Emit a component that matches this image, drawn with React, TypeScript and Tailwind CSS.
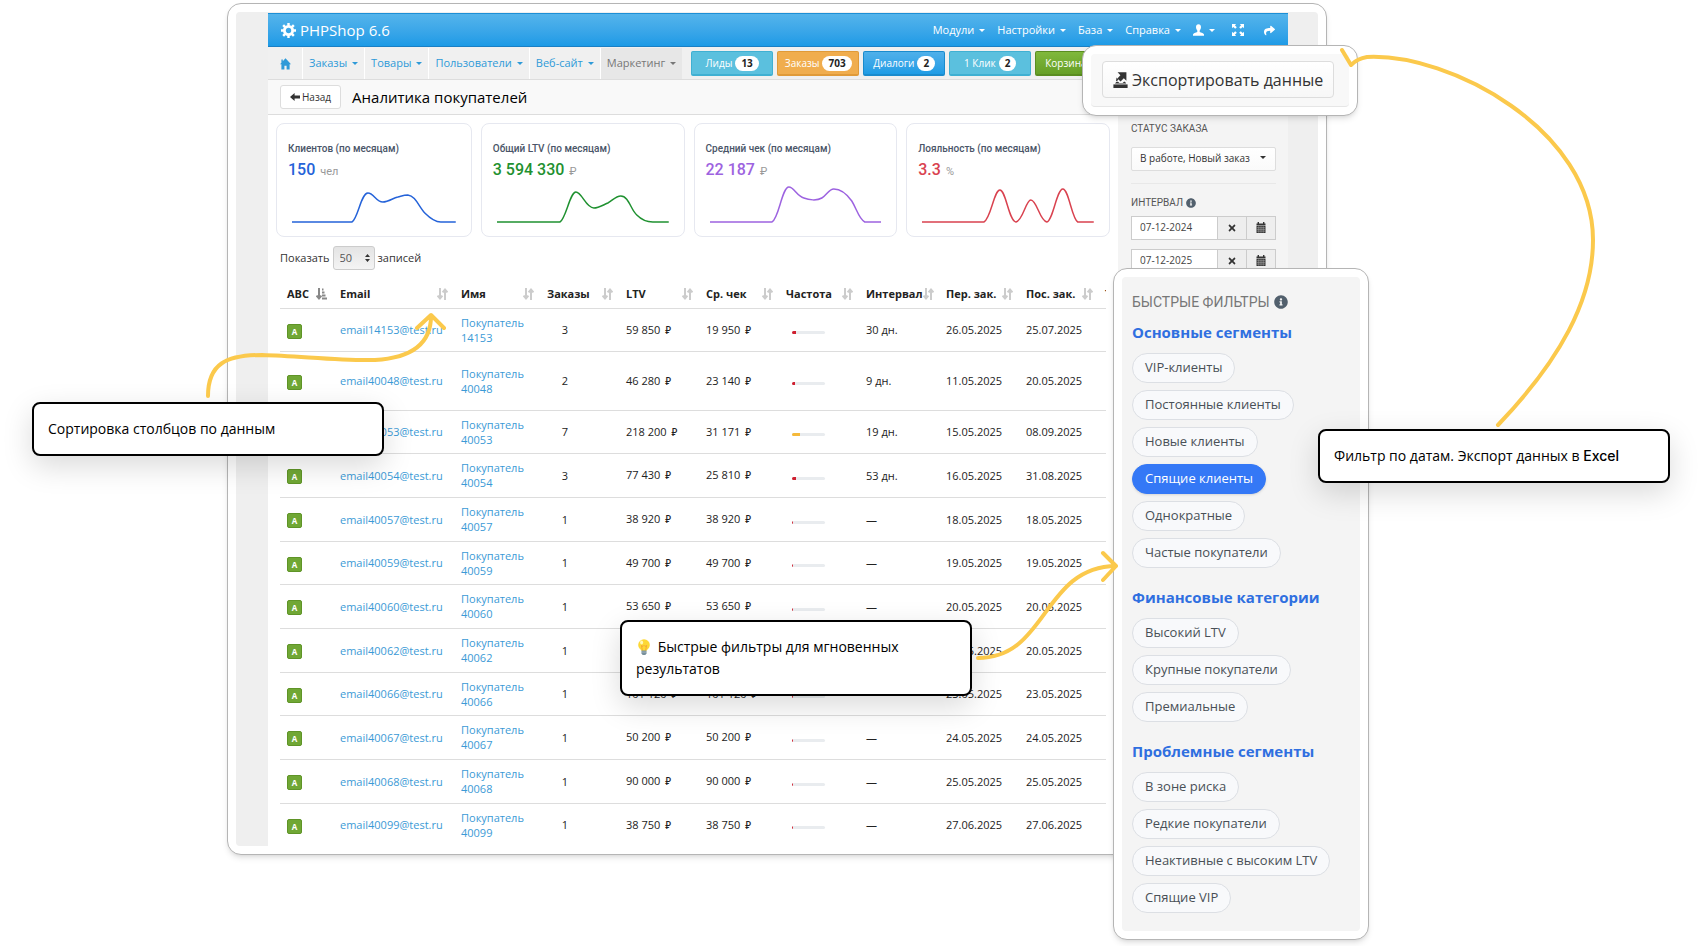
import React, { useState } from 'react';
import { FaInfoCircle, FaShare, FaTimes } from 'react-icons/fa';

interface Customer {
  id: string;
  orders: number;
  ltv: string;
  avg: string;
  freq: number;
  interval: string;
  first: string;
  last: string;
}

interface Stat {
  title: string;
  value: string;
  unit: string;
  color: string;
  width: number;
  path: string;
}

const STATS: Stat[] = [
  {
    title: 'Клиентов (по месяцам)',
    value: '150',
    unit: 'чел',
    color: 'text-[#2563d9]',
    width: 164,
    path: 'M0 38H60C66 35 69 9 76 9C82 9 84 18 91 18C97 18 101 14 106 13C110 12 112 11 116 11C124 12 127 23 133 29C138 34 143 38 149 38H164',
  },
  {
    title: 'Общий LTV (по месяцам)',
    value: '3 594 330',
    unit: '₽',
    color: 'text-[#1f9130]',
    width: 172,
    path: 'M0 38H63C69 35 73 8 79 8C85 8 89 24 97 24C102 24 106 21 111 19C115 17 119 12 124 12C132 12 134 26 140 31C145 36 151 38 156 38H172',
  },
  {
    title: 'Средний чек (по месяцам)',
    value: '22 187',
    unit: '₽',
    color: 'text-[#9d63e0]',
    width: 172,
    path: 'M0 38H62C69 35 72 3 79 3C84 3 87 12 94 14C99 16 107 17 112 14C117 11 119 5 124 5C131 5 137 10 142 17C147 25 149 35 155 38H172',
  },
  {
    title: 'Лояльность (по месяцам)',
    value: '3.3',
    unit: '%',
    color: 'text-[#d9424f]',
    width: 172,
    path: 'M0 38H62C69 35 72 6 78 6C84 6 87 37 94 38C101 37 104 16 109 16C115 16 118 37 125 38C131 37 135 5 141 5C147 5 150 35 156 38H172',
  },
];

const CUSTOMERS: Customer[] = [
  { id: '14153', orders: 3, ltv: '59 850', avg: '19 950', freq: 12, interval: '30 дн.', first: '26.05.2025', last: '25.07.2025' },
  { id: '40048', orders: 2, ltv: '46 280', avg: '23 140', freq: 8, interval: '9 дн.', first: '11.05.2025', last: '20.05.2025' },
  { id: '40053', orders: 7, ltv: '218 200', avg: '31 171', freq: 25, interval: '19 дн.', first: '15.05.2025', last: '08.09.2025' },
  { id: '40054', orders: 3, ltv: '77 430', avg: '25 810', freq: 12, interval: '53 дн.', first: '16.05.2025', last: '31.08.2025' },
  { id: '40057', orders: 1, ltv: '38 920', avg: '38 920', freq: 4, interval: '—', first: '18.05.2025', last: '18.05.2025' },
  { id: '40059', orders: 1, ltv: '49 700', avg: '49 700', freq: 4, interval: '—', first: '19.05.2025', last: '19.05.2025' },
  { id: '40060', orders: 1, ltv: '53 650', avg: '53 650', freq: 4, interval: '—', first: '20.05.2025', last: '20.05.2025' },
  { id: '40062', orders: 1, ltv: '63 400', avg: '63 400', freq: 4, interval: '—', first: '20.05.2025', last: '20.05.2025' },
  { id: '40066', orders: 1, ltv: '101 120', avg: '101 120', freq: 4, interval: '—', first: '23.05.2025', last: '23.05.2025' },
  { id: '40067', orders: 1, ltv: '50 200', avg: '50 200', freq: 4, interval: '—', first: '24.05.2025', last: '24.05.2025' },
  { id: '40068', orders: 1, ltv: '90 000', avg: '90 000', freq: 4, interval: '—', first: '25.05.2025', last: '25.05.2025' },
  { id: '40099', orders: 1, ltv: '38 750', avg: '38 750', freq: 4, interval: '—', first: '27.06.2025', last: '27.06.2025' },
];

const COLUMNS = [
  { label: 'ABC', width: 'w-[53px]' },
  { label: 'Email', width: 'w-[121px]' },
  { label: 'Имя', width: 'w-[86px]' },
  { label: 'Заказы', width: 'w-[79px]' },
  { label: 'LTV', width: 'w-[80px]' },
  { label: 'Ср. чек', width: 'w-[80px]' },
  { label: 'Частота', width: 'w-[80px]' },
  { label: 'Интервал', width: 'w-[80px]' },
  { label: 'Пер. зак.', width: 'w-[80px]' },
  { label: 'Пос. зак.', width: 'w-[80px]' },
];

const SEGMENTS = [
  {
    title: 'Основные сегменты',
    items: ['VIP-клиенты', 'Постоянные клиенты', 'Новые клиенты', 'Спящие клиенты', 'Однократные', 'Частые покупатели'],
  },
  { title: 'Финансовые категории', items: ['Высокий LTV', 'Крупные покупатели', 'Премиальные'] },
  { title: 'Проблемные сегменты', items: ['В зоне риска', 'Редкие покупатели', 'Неактивные с высоким LTV', 'Спящие VIP'] },
];

const COUNTERS = [
  { label: 'Лиды', count: 13, style: 'bg-[#5bc0de] border-[#3fb0d2]' },
  { label: 'Заказы', count: 703, style: 'bg-[#f0ad4e] border-[#e09a38]' },
  { label: 'Диалоги', count: 2, style: 'bg-linear-to-b from-[#4fb0ea] to-[#1d9ce5] border-[#1a8bcd]' },
  { label: '1 Клик', count: 2, style: 'bg-[#5bc0de] border-[#3fb0d2]' },
  { label: 'Корзина', count: 5, style: 'bg-linear-to-b from-[#80b83c] to-[#669f26] border-[#5a8d20]' },
];

const Caret = () => (
  <span className="inline-block border-x-[3px] border-t-[3px] border-x-transparent border-t-current" />
);

const GearIcon = () => (
  <svg width="15" height="15" viewBox="0 0 16 16" fill="none" stroke="currentColor">
    <circle cx="8" cy="8" r="4.4" strokeWidth="3" />
    <path strokeWidth="2.6" d="M8 0V3M8 13V16M0 8H3M13 8H16M2.3 2.3L4.4 4.4M11.6 11.6L13.7 13.7M2.3 13.7L4.4 11.6M11.6 4.4L13.7 2.3" />
  </svg>
);

const HomeIcon = () => (
  <svg width="11" height="12" viewBox="0 0 11 12" fill="currentColor">
    <path d="M5.5 0.3L11 6.2H9.6V11.6H6.6V7.8H4.4V11.6H1.4V6.2H0L1.4 4.7V1.6H2.8V3.2Z" />
  </svg>
);

const UserIcon = () => (
  <svg width="11" height="12" viewBox="0 0 11 12" fill="currentColor">
    <path d="M5.5 0.3C7.2 0.3 8 1.4 8 3.1C8 4.6 7.4 5.8 6.7 6.6V7.9C8.2 8.6 11 9.2 11 10.6V11.7H0V10.6C0 9.2 2.8 8.6 4.3 7.9V6.6C3.6 5.8 3 4.6 3 3.1C3 1.4 3.8 0.3 5.5 0.3Z" />
  </svg>
);

const BackIcon = () => (
  <svg width="10" height="8" viewBox="0 0 10 8" fill="currentColor">
    <path d="M0 4L4.6 0V2.6H10V5.4H4.6V8Z" />
  </svg>
);

const SortIcon = ({ active = false }: { active?: boolean }) => (
  <svg width="11" height="12" viewBox="0 0 11 12" fill="none" strokeWidth="2" className={`shrink-0 ${active ? 'stroke-[#888]' : 'stroke-[#ccc]'}`}>
    <path d="M3 0V10M0.6 7.6L3 10.4L5.4 7.6" />
    {active ? <path d="M6 1.5H7.5M6 4.5H8.5M6 7.5H9.5M6 10.5H11" /> : <path d="M8 12V2M5.6 4.4L8 1.6L10.4 4.4" />}
  </svg>
);

const ExportIcon = () => (
  <svg width="15" height="16" viewBox="0 0 15 16" fill="#333" className="shrink-0">
    <path d="M0.4 12.4H14.6V16H0.4Z" />
    <path d="M2 11.4L3.4 9.8H5L6.4 11H9.6L11 9.8H12L13.2 11.4Z" />
    <path d="M4.6 0.2H13.4V8.8L10.8 6.3L7.6 9.4L4.4 6.4L7.4 3.2Z" />
    <path d="M3.6 5.4L5.2 7.6L4.2 9H3Z" />
  </svg>
);

const FullscreenIcon = () => (
  <svg width="12" height="12" viewBox="0 0 12 12" fill="currentColor">
    <path d="M0 0H4.2L2.9 1.3L4.8 3.2L3.2 4.8L1.3 2.9L0 4.2Z" />
    <path d="M12 0H7.8L9.1 1.3L7.2 3.2L8.8 4.8L10.7 2.9L12 4.2Z" />
    <path d="M0 12H4.2L2.9 10.7L4.8 8.8L3.2 7.2L1.3 9.1L0 7.8Z" />
    <path d="M12 12H7.8L9.1 10.7L7.2 8.8L8.8 7.2L10.7 9.1L12 7.8Z" />
  </svg>
);

const CalendarIcon = () => (
  <svg width="10" height="11" viewBox="0 0 10 11">
    <path fill="#333" d="M0.5 1.5H1.6V0H3V1.5H7V0H8.4V1.5H9.5V3.4H0.5ZM0.5 4H9.5V11H0.5Z" />
    <path stroke="#bbb" strokeWidth="0.5" d="M0.8 5.7H9.2M0.8 7.4H9.2M0.8 9.1H9.2M2.8 4.2V10.8M5 4.2V10.8M7.2 4.2V10.8" />
  </svg>
);

const BulbIcon = () => (
  <svg width="16" height="16" viewBox="0 0 16 16" className="mr-[2px] inline-block align-[-3px]">
    <circle cx="8" cy="6" r="5.8" fill="#fdd835" />
    <path d="M4.4 9.5H11.6L10.4 12H5.6Z" fill="#fdd835" />
    <path d="M6.4 11.5L5.4 6.5L7 7.4L8 6.4L9 7.4L10.6 6.5L9.6 11.5" fill="none" stroke="#f19534" strokeWidth="0.7" />
    <ellipse cx="5.6" cy="3.6" rx="1.5" ry="2" fill="#fff8b8" />
    <path d="M5.5 11.6H10.5V14.2L9.4 16H6.6L5.5 14.2Z" fill="#78909c" />
    <path d="M5.5 13.1H10.5" stroke="#b0bec5" strokeWidth="0.7" />
  </svg>
);

const Ruble = () => <span className="ml-[5px] text-[10px] font-medium">₽</span>;

const Header = () => (
  <header className="flex h-[34px] items-center justify-between border-y border-t-[#1c8fd6] border-b-[#1a7fc4] bg-linear-to-b from-[#54b4eb] to-[#1b9ae6] px-[13px] text-white">
    <a href="#" className="flex items-center gap-1 text-[15px]">
      <GearIcon />
      PHPShop 6.6
    </a>
    <nav className="flex items-center gap-3 text-[11px]">
      {['Модули', 'Настройки', 'База', 'Справка'].map((item) => (
        <a key={item} href="#" className="flex items-center gap-[5px]">
          {item}
          <Caret />
        </a>
      ))}
      <a href="#" aria-label="Профиль" className="flex items-center gap-[5px]">
        <UserIcon />
        <Caret />
      </a>
      <a href="#" aria-label="Полный экран" className="ml-[5px]"><FullscreenIcon /></a>
      <a href="#" aria-label="Перейти на сайт" className="ml-2"><FaShare size={11} /></a>
    </nav>
  </header>
);

const Navbar = () => (
  <nav className="flex h-[33px] items-stretch border-b border-[#ddd] bg-[#f0f0f0] pt-px text-[11px] text-[#2e9ad8]">
    <a href="#" aria-label="Главная" className="flex items-center border-r border-white pr-[11px] pl-3"><HomeIcon /></a>
    {['Заказы', 'Товары', 'Пользователи', 'Веб-сайт'].map((item) => (
      <a key={item} href="#" className="flex items-center gap-[5px] border-r border-white px-[6px]">
        {item}
        <Caret />
      </a>
    ))}
    <a href="#" className="flex items-center gap-[5px] bg-[#e7e7e7] px-[6px] text-[#777]">
      Маркетинг
      <Caret />
    </a>
    <div className="ml-[9px] flex min-w-0 items-center gap-1 overflow-hidden">
      {COUNTERS.map((c) => (
        <button key={c.label} className={`flex h-[25px] w-[82px] shrink-0 items-center justify-center gap-[3px] rounded-[2px] border border-b-2 text-[10px] text-white ${c.style}`}>
          {c.label}
          <span className="rounded-full bg-white px-[6px] text-[10px] leading-[15px] font-bold text-[#222]">{c.count}</span>
        </button>
      ))}
    </div>
  </nav>
);

const StatCard = ({ stat }: { stat: Stat }) => (
  <div className="rounded-lg border border-[#e6e8f0] bg-white px-[11px] pt-[17px] pb-3 font-['Roboto',sans-serif]">
    <h3 className="text-[10px] leading-4 font-medium whitespace-nowrap text-[#4a5568]">{stat.title}</h3>
    <p className={`mt-px text-base leading-6 font-medium ${stat.color}`}>
      {stat.value} <span className="ml-px text-[11px] font-normal text-[#999]">{stat.unit}</span>
    </p>
    <div className={`px-1 ${stat.color}`}>
      <svg viewBox={`0 0 ${stat.width} 40`} preserveAspectRatio="none" className="h-10 w-full" fill="none" stroke="currentColor" strokeWidth="1.5">
        <path d={stat.path} />
      </svg>
    </div>
  </div>
);

const CustomersTable = () => (
  <div className="mr-3 overflow-hidden">
    <table className="w-[860px] table-fixed border-collapse text-[11px] leading-[15px] text-[#222]">
      <thead>
        <tr className="h-[28px] text-left">
          {COLUMNS.map((col, index) => (
            <th key={col.label} className={`p-0 pr-[6px] pl-[7px] font-bold ${col.width}`}>
              <span className="flex items-center justify-between whitespace-nowrap">
                {col.label}
                <SortIcon active={index === 0} />
              </span>
            </th>
          ))}
          <th className="p-0 pl-[6px] font-bold">Тренд</th>
        </tr>
      </thead>
      <tbody>
        {CUSTOMERS.map((row) => (
          <tr key={row.id} className={`border-t border-[#ddd] ${row.id === '40048' ? 'h-[59px]' : 'h-[44px] first:h-[43px] nth-[3n]:h-[43px]'}`}>
            <td className="pt-[3px] pl-[7px]">
              <span className="flex size-[15px] items-center justify-center rounded-[2px] border border-[#5f9427] bg-[#70a735] text-[8px] font-bold text-white">A</span>
            </td>
            <td className="pl-[7px]"><a href="#" className="text-[#3b9ad6]">email{row.id}@test.ru</a></td>
            <td className="pl-[7px]"><a href="#" className="block text-[#3b9ad6]">Покупатель<br />{row.id}</a></td>
            <td className="pl-[7px]"><span className="block w-[36px] text-center">{row.orders}</span></td>
            <td className="pl-[7px] whitespace-nowrap">{row.ltv}<Ruble /></td>
            <td className="pl-[7px] whitespace-nowrap">{row.avg}<Ruble /></td>
            <td className="pt-[6px] pl-[13px]">
              <div className="h-[3px] w-[33px] overflow-hidden rounded-full bg-[#e9ecef]">
                <div className={`h-full ${row.freq > 20 ? 'bg-[#f5b93a]' : 'bg-[#cf2030]'}`} style={{ width: `${row.freq}%` }} />
              </div>
            </td>
            <td className="pl-[7px]">{row.interval}</td>
            <td className="pl-[7px]">{row.first}</td>
            <td className="pl-[7px]">{row.last}</td>
            <td />
          </tr>
        ))}
      </tbody>
    </table>
  </div>
);

const DateField = ({ label, value }: { label: string; value: string }) => (
  <div className="flex h-6 border border-[#ccc] bg-white text-[#333]">
    <input aria-label={label} defaultValue={value} className="min-w-0 flex-1 px-2 text-[10px] text-[#444]" />
    <button aria-label="Очистить" className="flex w-[29px] items-center justify-center border-l border-[#ccc] bg-[#eee]"><FaTimes size={10} /></button>
    <button aria-label="Календарь" className="flex w-[29px] items-center justify-center border-l border-[#ccc] bg-[#eee]"><CalendarIcon /></button>
  </div>
);

const Sidebar = () => (
  <aside className="w-[170px] shrink-0 bg-[#f4f4f4] pt-[6px] pr-3 pl-[13px]">
    <h4 className="font-['Roboto',sans-serif] text-[10px] leading-4 text-[#555]">СТАТУС ЗАКАЗА</h4>
    <div className="relative mt-[7px]">
      <select aria-label="Статус заказа" className="h-6 w-full appearance-none rounded-[2px] border border-[#ddd] bg-linear-to-b from-white to-[#fafafa] px-2 text-[10px] text-[#333]">
        <option>В работе, Новый заказ</option>
      </select>
      <span className="pointer-events-none absolute top-0 right-[10px] flex h-full items-center text-[#333]"><Caret /></span>
    </div>
    <hr className="mt-3 border-[#e8e8e8]" />
    <h4 className="mt-[11px] flex items-center gap-[3px] font-['Roboto',sans-serif] text-[10px] leading-4 text-[#555]">
      ИНТЕРВАЛ <FaInfoCircle size={10} className="text-[#52606d]" />
    </h4>
    <div className="mt-[5px] flex flex-col gap-[9px]">
      <DateField label="Дата от" value="07-12-2024" />
      <DateField label="Дата до" value="07-12-2025" />
    </div>
  </aside>
);

const QuickFilters = () => {
  const [active, setActive] = useState('Спящие клиенты');

  return (
    <section className="rounded-[14px] border border-[#b5b5b5] bg-white p-2 shadow-md">
      <div className="rounded bg-[#f4f4f4] px-[10px] pt-4 pb-[18px]">
        <h2 className="flex items-center gap-1 font-['Roboto',sans-serif] text-sm leading-[18px] text-[#777]">
          БЫСТРЫЕ ФИЛЬТРЫ <FaInfoCircle size={14} className="text-[#52606d]" />
        </h2>
        <div className="mt-[9px] flex flex-col gap-[17px]">
          {SEGMENTS.map((segment) => (
            <div key={segment.title} className="flex flex-col items-start gap-[7px]">
              <h3 className="mb-[2px] text-[15px] leading-6 font-bold whitespace-nowrap text-[#2f6fe0]">{segment.title}</h3>
              {segment.items.map((item) => (
                <button
                  key={item}
                  onClick={() => setActive(item)}
                  className={`h-[30px] rounded-full border px-3 text-[13px] whitespace-nowrap ${
                    active === item ? 'border-[#3478f6] bg-[#3478f6] text-white shadow-sm' : 'border-[#dcdfe4] bg-[#f8f9fb] text-[#495057]'
                  }`}
                >
                  {item}
                </button>
              ))}
            </div>
          ))}
        </div>
      </div>
    </section>
  );
};

const Callout = ({ className, children }: { className: string; children: React.ReactNode }) => (
  <div className={`absolute w-[352px] rounded-lg border-2 border-black bg-white px-[14px] py-[14px] text-sm leading-[22px] text-black shadow-[0_10px_30px_rgba(0,0,0,0.15)] ${className}`}>
    {children}
  </div>
);

export default function App() {
  return (
    <div className="relative min-h-screen overflow-hidden bg-white pt-[3px] font-['Open_Sans','Noto_Sans',sans-serif]">
      <main className="mr-[375px] ml-[227px] rounded-[14px] border border-[#b5b5b5] bg-white p-2 shadow-md">
        <div className="rounded bg-[#efefef] pt-px pr-[30px] pl-8">
          <div className="bg-white">
            <Header />
            <Navbar />
            <div className="flex h-[35px] items-center gap-[11px] border-b border-[#ddd] bg-[#f9f9f9] px-3">
              <button className="flex h-6 items-center gap-[2px] rounded-[3px] border border-[#ddd] bg-white px-[9px] text-[10px] text-[#333]">
                <BackIcon /> Назад
              </button>
              <h1 className="text-[15px] text-black">Аналитика покупателей</h1>
            </div>
            <div className="flex">
              <div className="min-w-0 flex-1">
                <div className="grid grid-cols-[196fr_204fr_204fr_204fr] gap-[9px] px-2 pt-2">
                  {STATS.map((stat) => (
                    <StatCard key={stat.title} stat={stat} />
                  ))}
                </div>
                <div className="pl-3">
                  <label className="mt-[9px] mb-[10px] flex items-center gap-[3px] text-[11px] text-[#333]">
                    Показать
                    <span className="relative">
                      <select className="h-6 w-[42px] appearance-none rounded-[3px] border border-[#ccc] bg-linear-to-b from-[#e4e4e4] to-[#f4f4f4] px-[6px] text-[11px] text-[#555]">
                        <option>50</option>
                      </select>
                      <svg width="5" height="8" viewBox="0 0 5 8" fill="#333" className="pointer-events-none absolute top-2 right-[5px]">
                        <path d="M2.5 0L5 3H0ZM2.5 8L5 5H0Z" />
                      </svg>
                    </span>
                    записей
                  </label>
                  <CustomersTable />
                </div>
              </div>
              <Sidebar />
            </div>
          </div>
        </div>
      </main>

      <div className="absolute top-[45px] left-[1082px] rounded-[14px] border border-[#b5b5b5] bg-white p-2 shadow-md">
        <div className="rounded border-b border-[#e6e6e6] bg-[#f8f8f8] pt-[7px] pr-[15px] pb-2 pl-[11px]">
          <button className="flex h-[37px] items-center gap-1 rounded border border-[#ddd] bg-linear-to-b from-white to-[#f7f7f7] px-[10px] text-base whitespace-nowrap text-[#333]">
            <ExportIcon /> Экспортировать данные
          </button>
        </div>
      </div>

      <div className="absolute top-[268px] left-[1113px] w-[256px]">
        <QuickFilters />
      </div>

      <Callout className="top-[402px] left-[32px]">Сортировка столбцов по данным</Callout>
      <Callout className="top-[429px] left-[1318px]">
        Фильтр по датам. Экспорт данных в <span className="font-['Inter',sans-serif] font-medium">Excel</span>
      </Callout>
      <Callout className="top-[620px] left-[620px]">
        <BulbIcon /> Быстрые фильтры для мгновенных результатов
      </Callout>

      <svg width="1702" height="946" viewBox="0 0 1702 946" fill="none" stroke="#fbc94c" strokeWidth="4" strokeLinecap="round" strokeLinejoin="round" className="pointer-events-none absolute top-0 left-0">
        <path d="M208 396C208 364 226 355 262 355C300 356 340 361 375 360C410 358 431 345 431 316M417 328L431 315L444 328" />
        <path d="M978 658C1048 658 1042 567 1116 566M1103 553L1116 566L1103 580" />
        <path d="M1498 425C1560 360 1593 300 1593 240C1593 130 1450 53 1367 57C1361 58 1355 61 1351 65L1342 50" />
      </svg>
    </div>
  );
}
